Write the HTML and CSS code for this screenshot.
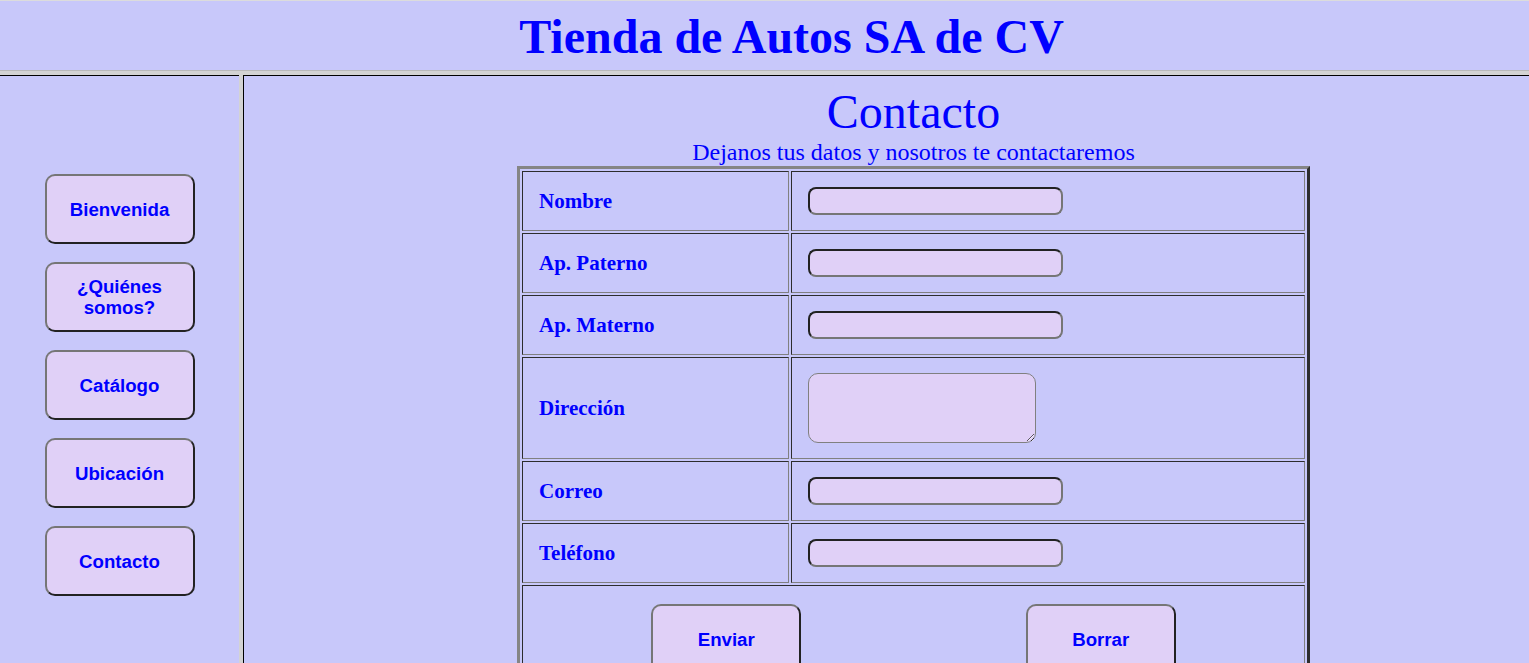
FILE: index.html
```html
<!DOCTYPE html>
<html lang="es">
<head>
<meta charset="utf-8">
<title>Tienda de Autos SA de CV</title>
<link rel="stylesheet" href="styles.css">
</head>
<body>
<div class="page">
  <header class="top-frame">
    <h1 class="site-title">Tienda de Autos SA de CV</h1>
  </header>
  <div class="h-divider"></div>
  <div class="lower">
    <nav class="left-frame">
      <button class="nav-btn" type="button">Bienvenida</button>
      <button class="nav-btn" type="button">¿Quiénes somos?</button>
      <button class="nav-btn" type="button">Catálogo</button>
      <button class="nav-btn" type="button">Ubicación</button>
      <button class="nav-btn" type="button">Contacto</button>
    </nav>
    <div class="v-divider"></div>
    <main class="right-frame">
      <div class="content">
        <h2 class="page-title">Contacto</h2>
        <p class="subtitle">Dejanos tus datos y nosotros te contactaremos</p>
        <form class="contact-form">
          <table class="form-table">
            <colgroup><col class="col-label"><col class="col-field"></colgroup>
            <tr><td class="label">Nombre</td><td class="field"><input class="text-input" type="text"></td></tr>
            <tr><td class="label">Ap. Paterno</td><td class="field"><input class="text-input" type="text"></td></tr>
            <tr><td class="label">Ap. Materno</td><td class="field"><input class="text-input" type="text"></td></tr>
            <tr><td class="label">Dirección</td><td class="field"><textarea class="text-area"></textarea></td></tr>
            <tr><td class="label">Correo</td><td class="field"><input class="text-input" type="email"></td></tr>
            <tr><td class="label">Teléfono</td><td class="field"><input class="text-input" type="tel"></td></tr>
            <tr><td class="actions" colspan="2">
              <div class="action-row">
                <button class="form-btn" type="submit">Enviar</button>
                <button class="form-btn" type="reset">Borrar</button>
              </div>
            </td></tr>
          </table>
        </form>
      </div>
    </main>
  </div>
</div>
</body>
</html>
```
FILE: styles.css
```css
html, body {
  margin: 0;
  padding: 0;
  height: 100%;
  overflow: hidden;
  background: #c8c8fa;
}

.page {
  display: flex;
  flex-direction: column;
  height: 100vh;
}

.top-frame {
  flex: none;
  height: 69px;
  border-top: 1px solid #dcdcdc;
  border-bottom: 1px solid #b9b9b9;
  background: #c8c8fa;
  box-sizing: content-box;
  padding-left: 54px;
}

.site-title {
  margin: 0;
  padding-top: 8px;
  text-align: center;
  font-family: "Liberation Serif", "Times New Roman", serif;
  font-size: 48px;
  font-weight: bold;
  color: #0000ff;
}

.h-divider {
  flex: none;
  height: 4px;
  background: #d3d3d3;
}

.lower {
  flex: 1;
  display: flex;
  min-height: 0;
}

.left-frame {
  flex: none;
  width: 239px;
  border-top: 1px solid #000;
  background: #c8c8fa;
  display: flex;
  flex-direction: column;
  align-items: center;
  gap: 18px;
  padding-top: 98px;
  box-sizing: border-box;
}

.nav-btn,
.form-btn {
  width: 150px;
  height: 70px;
  box-sizing: border-box;
  background: #e0d0f7;
  border: 2px solid;
  border-color: #767676 #222 #222 #767676;
  border-radius: 10px;
  font-family: "Liberation Sans", Arial, sans-serif;
  font-size: 18.67px;
  font-weight: bold;
  color: #0000ff;
  padding: 0 16px;
  line-height: 21px;
  cursor: pointer;
}

.v-divider {
  flex: none;
  width: 4px;
  background: #d3d3d3;
}

.right-frame {
  flex: 1;
  border-top: 1px solid #000;
  border-left: 1px solid #000;
  background: #c8c8fa;
  min-width: 0;
}

.content {
  padding-top: 8px;
  padding-left: 54px;
  display: flex;
  flex-direction: column;
  align-items: center;
  font-family: "Liberation Serif", "Times New Roman", serif;
  color: #0000ff;
}

.page-title {
  margin: 0;
  font-size: 48px;
  font-weight: normal;
}

.subtitle {
  margin: 0;
  font-size: 24px;
}

.form-table {
  width: 793px;
  table-layout: fixed;
  border: 3px solid;
  border-color: #858585 #2d2d2d #2d2d2d #858585;
  border-spacing: 2px;
}

.col-label { width: 267px; }

.form-table td {
  border: 1px solid;
  border-color: #2d2d2d #808080 #808080 #2d2d2d;
  padding: 15px 16px;
  vertical-align: middle;
}

.label {
  font-family: "Liberation Serif", "Times New Roman", serif;
  font-size: 21px;
  font-weight: bold;
  color: #0000ff;
}

.field { padding-left: 15px; }

.text-input {
  display: block;
  width: 255px;
  height: 28px;
  box-sizing: border-box;
  margin: 0;
  background: #e0d0f7;
  border: 2px solid;
  border-color: #222 #767676 #767676 #222;
  border-radius: 8px;
}

.text-area {
  display: block;
  width: 228px;
  height: 70px;
  box-sizing: border-box;
  margin: 0;
  background: #e0d0f7;
  border: 1px solid #808080;
  border-radius: 10px;
}

.form-table td.actions {
  padding-top: 18px;
}

.action-row {
  display: flex;
  justify-content: space-around;
}
```
